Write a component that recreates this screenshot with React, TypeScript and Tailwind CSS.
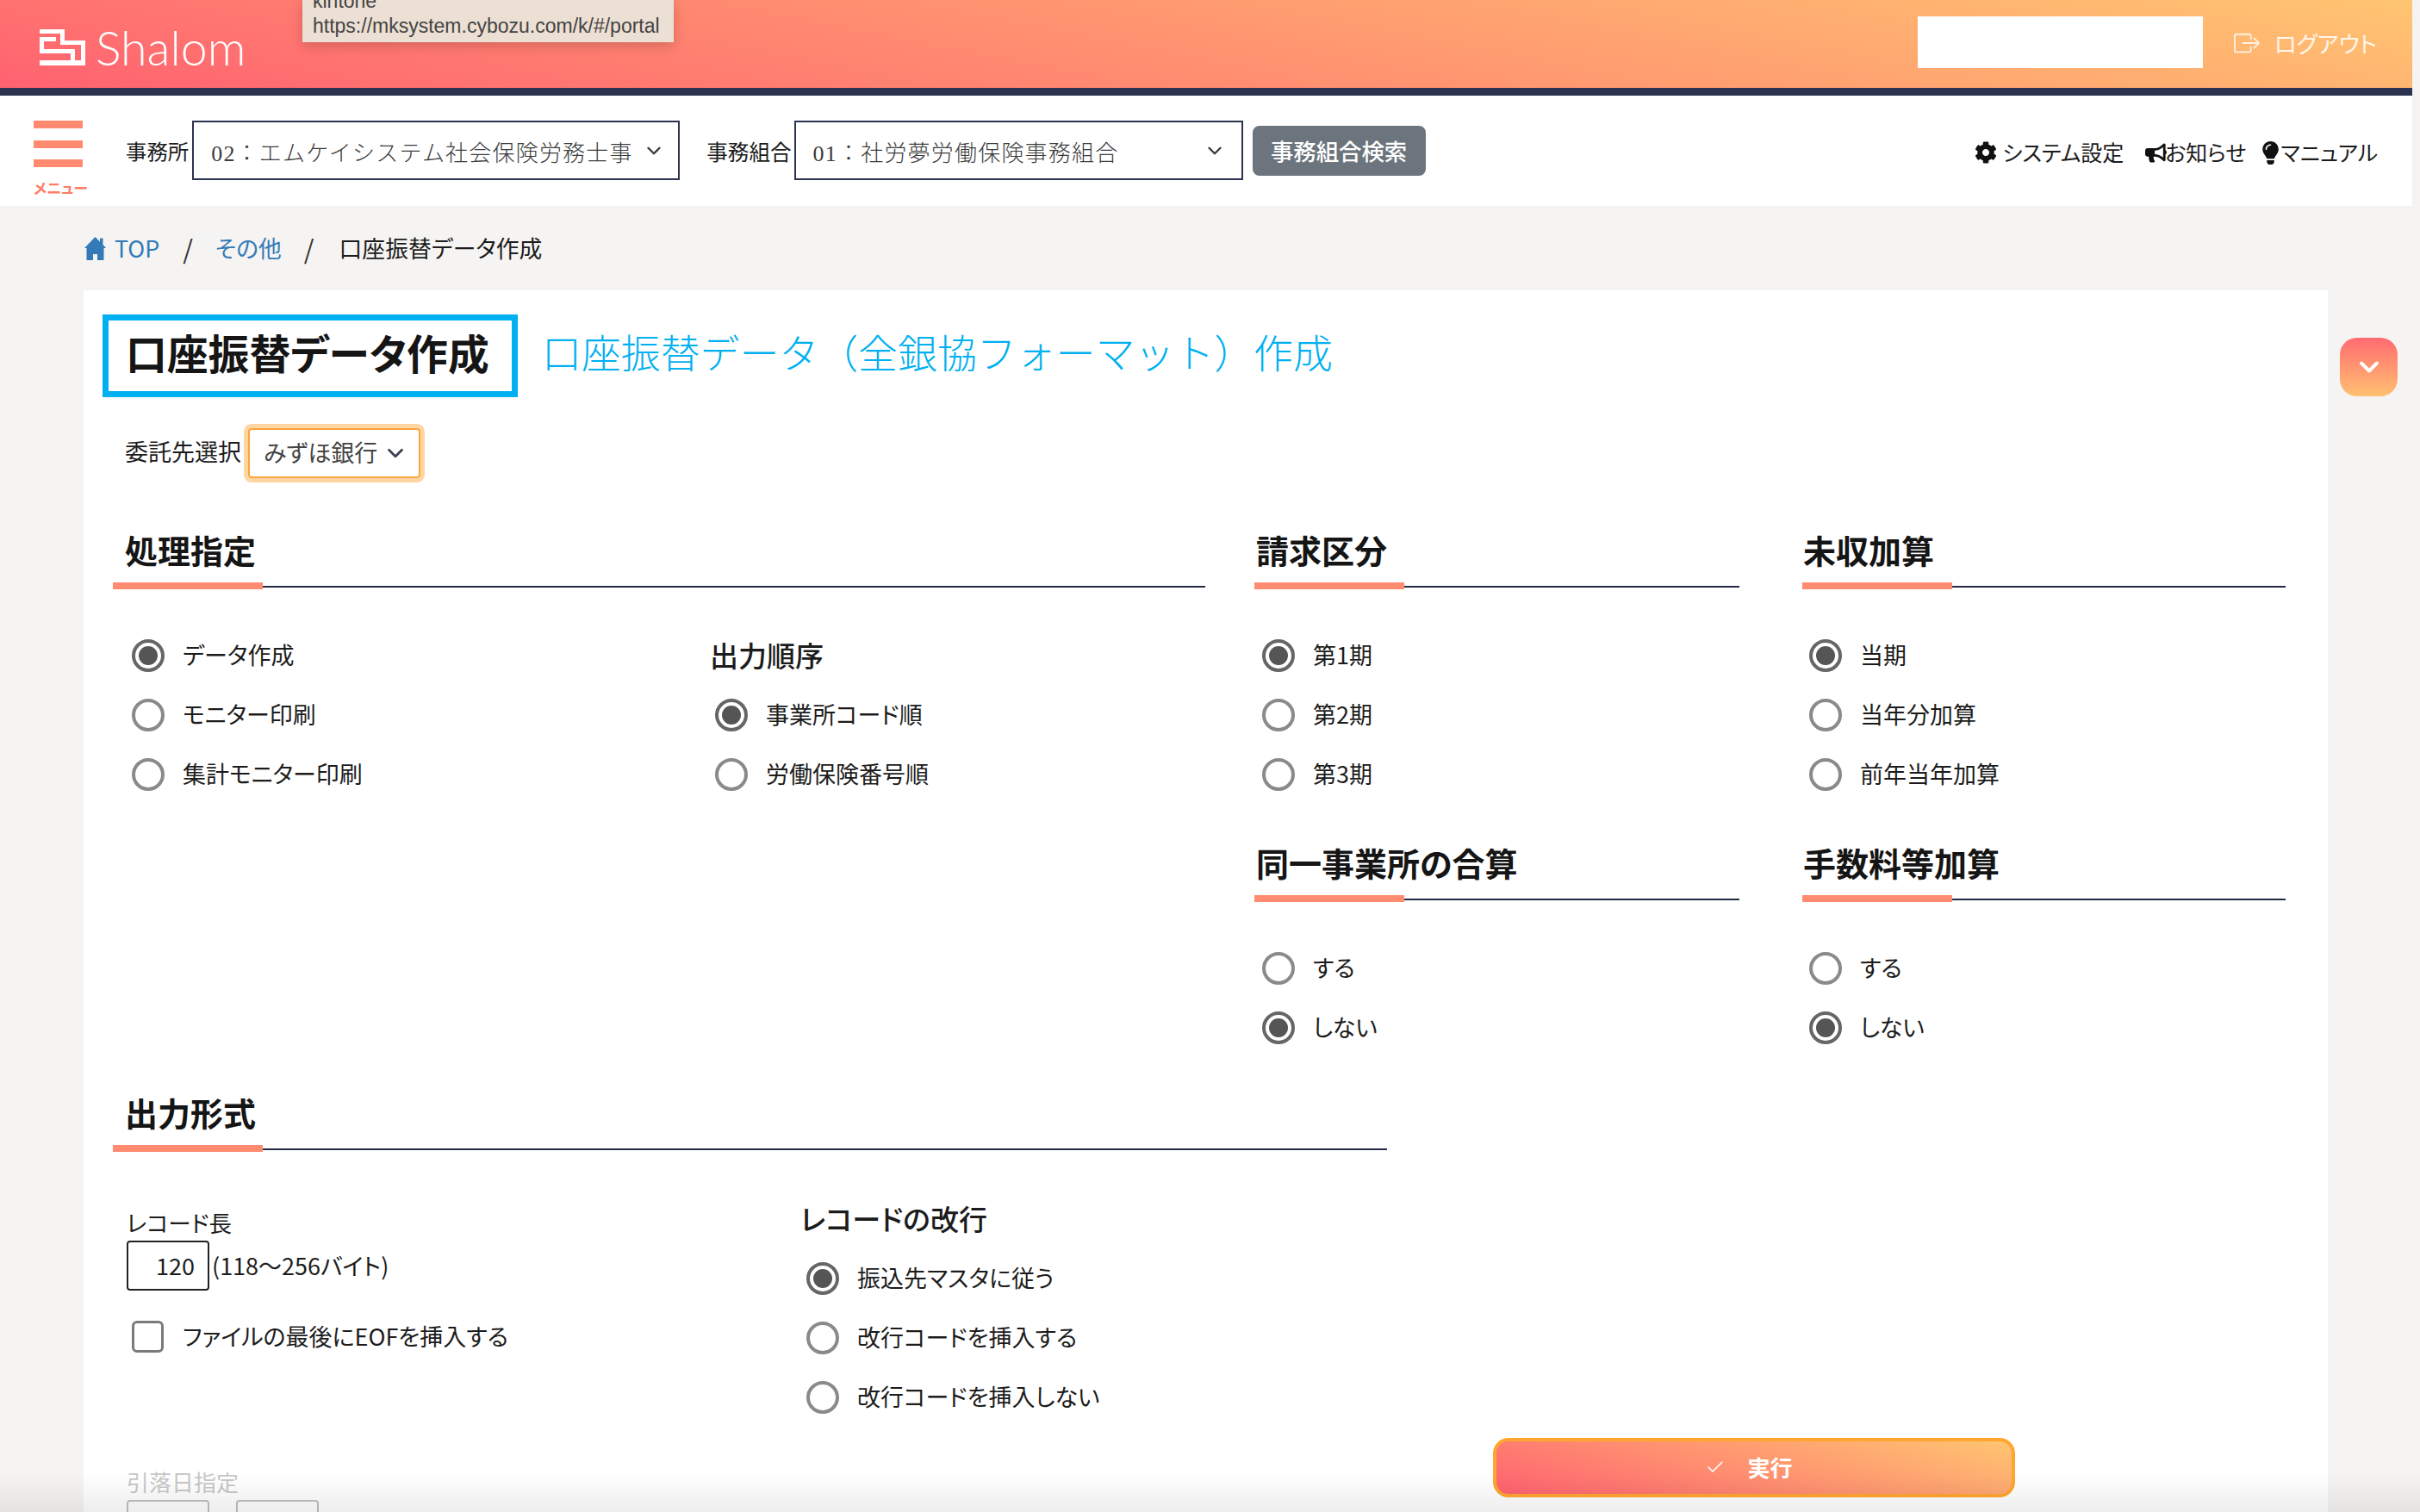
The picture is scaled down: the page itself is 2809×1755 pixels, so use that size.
import { Check, ChevronDown } from "lucide-react";
import { BsBoxArrowRight } from "react-icons/bs";
import { FaBullhorn, FaCog, FaLightbulb } from "react-icons/fa";

function Logo() {
  return (
    <svg viewBox="0 0 53 42" className="mt-[8px] h-[42px] w-[53px] fill-white">
      <rect x="0" y="0" width="29" height="5" />
      <rect x="24" y="0" width="5" height="18" />
      <rect x="24" y="13" width="29" height="5" />
      <rect x="48" y="13" width="5" height="29" />
      <rect x="0" y="36" width="53" height="6" />
      <rect x="0" y="9" width="19" height="5" />
      <rect x="0" y="9" width="5" height="19" />
      <rect x="0" y="23" width="41" height="5" />
      <rect x="36" y="23" width="5" height="19" />
    </svg>
  );
}

function HomeIcon() {
  return (
    <svg viewBox="0 0 25 27" className="h-[27px] w-[25px] fill-[#337ab7]">
      <path d="M12.5 0L18 5.5V1.5H21.5V9L25 13H22.5V27H15V20H10V27H2.5V13H0Z" />
    </svg>
  );
}

function SectionTitle({ title, inset = "" }: { title: string; inset?: string }) {
  return (
    <div>
      <h2 className={`h-[60px] text-[38px] leading-[55px] font-bold text-[#151515] ${inset}`}>{title}</h2>
      <div className="mt-[6px] flex h-[8px] items-center">
        <div className="h-[8px] w-[174px] bg-[#ff8c70]" />
        <div className="mt-[1px] h-[2px] flex-1 bg-[#232a45]" />
      </div>
    </div>
  );
}

function Radio({ label, checked = false }: { label: string; checked?: boolean }) {
  return (
    <div className="flex h-[69px] items-center gap-[21px]">
      <span
        className={`flex h-[38px] w-[38px] items-center justify-center rounded-full border-[4px] ${
          checked ? "border-[#666666]" : "border-[#8a8a8a]"
        }`}
      >
        {checked && <span className="h-[22px] w-[22px] rounded-full bg-[#555555]" />}
      </span>
      <span className="text-[27px] text-[#1c1c1c]">{label}</span>
    </div>
  );
}

function NavSelect({ text, width, right }: { text: string; width: string; right: string }) {
  return (
    <div className={`flex h-[69px] items-center justify-between border-[2px] border-[#2b3350] bg-white pl-[20px] ${right} ${width}`}>
      <span className="pt-[8px] font-['Liberation_Serif','Noto_Sans_CJK_JP',serif] text-[26px] font-light tracking-[1.2px] whitespace-nowrap text-[#3c3c3c] [font-feature-settings:normal]">
        {text}
      </span>
      <ChevronDown size={26} strokeWidth={2.2} className="text-[#3c3c3c]" />
    </div>
  );
}

export default function App() {
  return (
    <div className="relative h-[1755px] w-[2809px] overflow-hidden bg-[#f5f4f2] font-['Noto_Sans_CJK_JP','Noto_Sans',sans-serif] text-[#1c1c1c] [font-feature-settings:'palt']">
      <div className="w-[2800px]">
        <header className="relative flex h-[111px] items-center border-b-[9px] border-[#2b3350] bg-[linear-gradient(11deg,#ff6270,#ffc571)] pr-[41px] pl-[46px]">
          <Logo />
          <span className="mt-[7px] ml-[12px] font-['Lato',sans-serif] text-[55.5px] leading-none font-light text-white">Shalom</span>
          <div className="mb-[4px] ml-auto h-[60px] w-[331px] bg-white" />
          <BsBoxArrowRight size={30} className="mb-[2px] ml-[36px] text-[#fff2e2]" />
          <span className="mb-[3px] ml-[17px] text-[26.6px] text-[#fff6ec]">ログアウト</span>
        </header>

        <nav className="flex h-[128px] items-start bg-white pt-[29px] pl-[39px]">
          <div className="w-[62px]">
            <div className="h-[9px] w-[57px] bg-[#ff8a70]" />
            <div className="mt-[14px] h-[9px] w-[57px] bg-[#ff8a70]" />
            <div className="mt-[13px] h-[9px] w-[57px] bg-[#ff8a70]" />
            <div className="mt-[16px] text-[17px] leading-[16px] font-bold whitespace-nowrap text-[#ff7d66]">メニュー</div>
          </div>
          <div className="ml-[45px] flex h-[69px] items-center gap-[4px]">
            <span className="pt-[2px] text-[24.4px] whitespace-nowrap">事務所</span>
            <NavSelect text="02：エムケイシステム社会保険労務士事" width="w-[566px]" right="pr-[15px]" />
          </div>
          <div className="ml-[31px] flex h-[69px] items-center gap-[3px]">
            <span className="pt-[2px] text-[24.6px] whitespace-nowrap">事務組合</span>
            <NavSelect text="01：社労夢労働保険事務組合" width="w-[521px]" right="pr-[18px]" />
          </div>
          <div className="mt-[6px] ml-[11px] flex h-[58px] w-[201px] items-center justify-center rounded-[8px] bg-[#6c757d] text-[26.4px] font-medium text-white">
            事務組合検索
          </div>
          <div className="mr-[40px] ml-auto flex h-[69px] items-center pt-[5px] text-[25px] text-[#1c1c1c]">
            <FaCog size={26} className="text-[#111111]" />
            <span className="ml-[6px]">システム設定</span>
            <FaBullhorn size={25} className="ml-[25px] text-[#111111]" />
            <span className="ml-[-2px]">お知らせ</span>
            <FaLightbulb size={27} className="ml-[15px] text-[#111111]" />
            <span className="ml-[-2px]">マニュアル</span>
          </div>
        </nav>

        <div className="flex h-[98px] items-center pl-[98px] text-[26.8px]">
          <HomeIcon />
          <span className="ml-[10px] text-[#337ab7]">TOP</span>
          <span className="mr-[26px] ml-[27px] text-[30px] text-[#333333]">/</span>
          <span className="text-[#337ab7]">その他</span>
          <span className="mr-[29px] ml-[26px] text-[30px] text-[#333333]">/</span>
          <span>口座振替データ作成</span>
        </div>

        <main className="ml-[97px] h-[1500px] w-[2605px] bg-white pt-[28px]">
          <div className="flex items-center pl-[22px]">
            <div className="flex h-[96px] w-[482px] items-center border-[7px] border-[#00b0f0] pb-[8px] pl-[20px]">
              <h1 className="text-[47.8px] font-bold whitespace-nowrap text-[#151515]">口座振替データ作成</h1>
            </div>
            <div className="mb-[12px] ml-[28px] text-[45.9px] font-light whitespace-nowrap text-[#00b0f0] [font-feature-settings:normal]">
              口座振替データ（全銀協フォーマット）作成
            </div>
          </div>

          <div className="mt-[36px] flex items-center pl-[48px]">
            <span className="pb-[3px] text-[27px]">委託先選択</span>
            <div className="ml-[8px] flex h-[58px] w-[200px] items-center gap-[6px] rounded-[4px] border-[2px] border-[#fda43a] pl-[16px] shadow-[0_0_0_5px_#fed6a4]">
              <span className="pb-[2px] text-[27px] text-[#444444]">みずほ銀行</span>
              <ChevronDown size={30} strokeWidth={2.2} className="text-[#3a4250]" />
            </div>
          </div>

          <div className="mt-[55px] ml-[34px] grid grid-cols-[1268px_563px_577px] gap-x-[57px]">
            <section>
              <SectionTitle title="処理指定" inset="pl-[14px]" />
              <div className="mt-[42px] grid grid-cols-[693px_1fr]">
                <div className="pl-[22px]">
                  <Radio label="データ作成" checked />
                  <Radio label="モニター印刷" />
                  <Radio label="集計モニター印刷" />
                </div>
                <div>
                  <div className="flex h-[69px] items-center text-[33px] font-medium">出力順序</div>
                  <div className="pl-[6px]">
                    <Radio label="事業所コード順" checked />
                    <Radio label="労働保険番号順" />
                  </div>
                </div>
              </div>
            </section>

            <section>
              <SectionTitle title="請求区分" inset="pl-[2px]" />
              <div className="mt-[42px] pl-[9px]">
                <Radio label="第1期" checked />
                <Radio label="第2期" />
                <Radio label="第3期" />
              </div>
              <div className="mt-[40px]">
                <SectionTitle title="同一事業所の合算" inset="pl-[2px]" />
              </div>
              <div className="mt-[42px] pl-[9px]">
                <Radio label="する" />
                <Radio label="しない" checked />
              </div>
            </section>

            <section className="ml-[16px]">
              <SectionTitle title="未収加算" inset="pl-[1px]" />
              <div className="mt-[42px] pl-[8px]">
                <Radio label="当期" checked />
                <Radio label="当年分加算" />
                <Radio label="前年当年加算" />
              </div>
              <div className="mt-[40px]">
                <SectionTitle title="手数料等加算" inset="pl-[1px]" />
              </div>
              <div className="mt-[42px] pl-[8px]">
                <Radio label="する" />
                <Radio label="しない" checked />
              </div>
            </section>
          </div>

          <section className="mt-[36px] ml-[34px] w-[1479px]">
            <SectionTitle title="出力形式" inset="pl-[14px]" />
            <div className="grid grid-cols-[798px_1fr]">
              <div className="pt-[67px] pl-[16px]">
                <div className="text-[26.5px] leading-[30px]">レコード長</div>
                <div className="mt-[6px] flex items-center gap-[3px]">
                  <div className="flex h-[58px] w-[96px] items-center justify-end rounded-[4px] border-[2px] border-[#222222] pr-[15px] text-[27px]">
                    120
                  </div>
                  <span className="text-[27px]">(118〜256バイト)</span>
                </div>
                <div className="mt-[33px] flex items-center pl-[6px]">
                  <span className="h-[37px] w-[37px] rounded-[6px] border-[3px] border-[#7a7a7a]" />
                  <span className="ml-[22px] text-[27px]">ファイルの最後にEOFを挿入する</span>
                </div>
                <div className="mt-[133px] text-[26px] leading-[30px] text-[#c8c8c8]">引落日指定</div>
                <div className="mt-[6px] flex gap-[31px]">
                  <div className="h-[58px] w-[96px] rounded-[4px] border-[2px] border-[#c0c0c0]" />
                  <div className="h-[58px] w-[96px] rounded-[4px] border-[2px] border-[#c0c0c0]" />
                </div>
              </div>
              <div className="pt-[43px]">
                <div className="flex h-[69px] items-center text-[33px] font-medium">レコードの改行</div>
                <div className="pl-[7px]">
                  <Radio label="振込先マスタに従う" checked />
                  <Radio label="改行コードを挿入する" />
                  <Radio label="改行コードを挿入しない" />
                </div>
              </div>
            </div>
          </section>
        </main>
      </div>

      <div className="absolute top-0 left-[351px] h-[49px] w-[431px] overflow-hidden bg-[#ecdfd3] pl-[12px] font-['Liberation_Sans',sans-serif] text-[23px] leading-[29px] text-[#444444] shadow-[0_4px_14px_rgba(0,0,0,0.18)]">
        <div className="mt-[-13px]">kintone</div>
        <div>https://mksystem.cybozu.com/k/#/portal</div>
      </div>

      <div className="absolute top-[392px] left-[2716px] flex h-[68px] w-[67px] items-center justify-center rounded-[20px] bg-[linear-gradient(to_bottom,#ff6b70,#ffc071)]">
        <ChevronDown size={36} strokeWidth={2.6} className="text-white" />
      </div>

      <div className="absolute top-[1669px] left-[1733px] flex h-[69px] w-[606px] items-center justify-center rounded-[18px] border-[4px] border-[#ffa630] bg-[linear-gradient(15deg,#ff6270,#ffc571)] pr-[12px] pb-[2px] text-[26px] font-bold text-white">
        <Check size={24} strokeWidth={1.6} className="mr-[25px]" />
        実行
      </div>

      <div className="absolute right-0 bottom-0 left-0 h-[45px] bg-[linear-gradient(to_bottom,rgba(0,0,0,0),rgba(0,0,0,0.07))]" />
    </div>
  );
}
